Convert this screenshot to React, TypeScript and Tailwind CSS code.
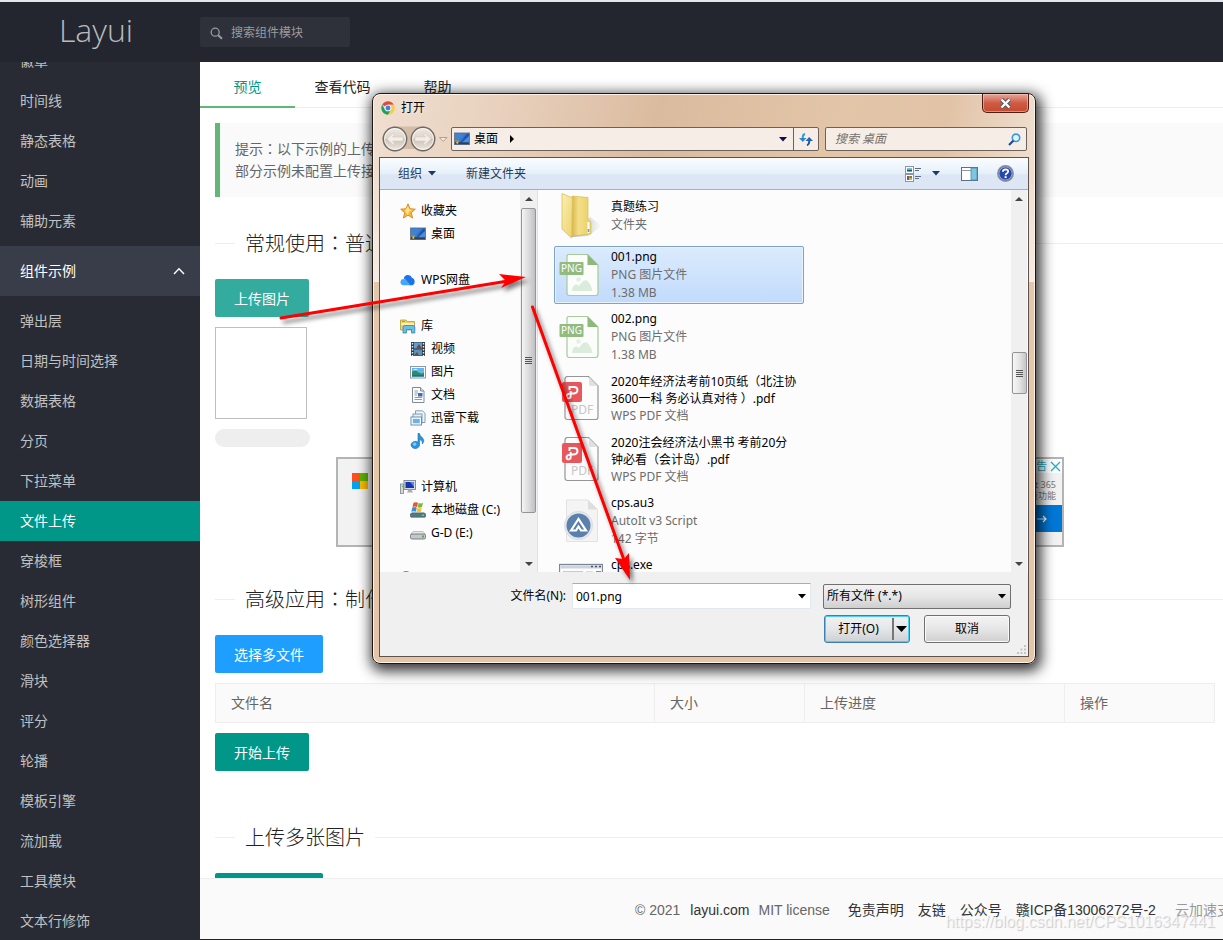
import React from "react";

const shortcutsTop = ["徽章", "时间线", "静态表格", "动画", "辅助元素"];
const shortcutsBottom = [
  "弹出层",
  "日期与时间选择",
  "数据表格",
  "分页",
  "下拉菜单",
  "文件上传",
  "穿梭框",
  "树形组件",
  "颜色选择器",
  "滑块",
  "评分",
  "轮播",
  "模板引擎",
  "流加载",
  "工具模块",
  "文本行修饰",
];

/* ---------- icons ---------- */

function ChromeIcon() {
  return (
    <svg width="14" height="14" viewBox="0 0 48 48" aria-hidden="true">
      <path d="M24 24 4.1 12.5A23 23 0 0 1 43.9 12.5H24Z" fill="#dd4b3e" />
      <path d="M24 24 43.9 12.5A23 23 0 0 1 24 47L34 30Z" fill="#fdcb3c" />
      <path d="M24 24 14 30 4.1 12.5A23 23 0 0 0 24 47L34 30Z" fill="#20a05a" />
      <path d="M24 12.5H43.9L34 30Z" fill="#fdcb3c" />
      <circle cx="24" cy="24" r="11.5" fill="#fff" />
      <circle cx="24" cy="24" r="8.5" fill="#3f7fe8" />
    </svg>
  );
}

function NavCircles() {
  return (
    <svg width="68" height="28" viewBox="0 0 68 28" aria-hidden="true">
      <defs>
        <linearGradient id="circ" x1="0" y1="0" x2="0" y2="1">
          <stop offset="0" stopColor="#efe9e3" />
          <stop offset="0.5" stopColor="#ddd3c9" />
          <stop offset="0.52" stopColor="#cdc2b7" />
          <stop offset="1" stopColor="#efe8e1" />
        </linearGradient>
      </defs>
      <path d="M14 1.5H42a12 12 0 0 1 0 25Q36 26 34 24H22Q19 26 14 26.5A12 12 0 0 1 14 1.5Z" fill="#c9b09a" opacity="0.7" />
      <circle cx="14" cy="14" r="11.7" fill="url(#circ)" stroke="#6f6a66" strokeWidth="1.4" />
      <circle cx="14" cy="14" r="10.4" fill="none" stroke="#fff" strokeOpacity="0.7" />
      <circle cx="42" cy="14" r="11.7" fill="url(#circ)" stroke="#6f6a66" strokeWidth="1.4" />
      <circle cx="42" cy="14" r="10.4" fill="none" stroke="#fff" strokeOpacity="0.7" />
      <path d="M6 14 13 7.5V10.5L11.500 12H22V16H11.500L13 17.500V20.500Z" fill="#f3eee9" stroke="#d3cac1" strokeWidth="0.6" />
      <path d="M50 14 43 7.500V10.500L44.500 12H34V16H44.500L43 17.500V20.500Z" fill="#f3eee9" stroke="#d3cac1" strokeWidth="0.6" />
      <path d="M58.500 12.500H66L62.200 16.500Z" fill="#f3e6da" stroke="#a58f7c" strokeWidth="0.8" />
    </svg>
  );
}

function DesktopIcon() {
  return (
    <svg width="16" height="16" viewBox="0 0 16 16" aria-hidden="true">
      <rect x="0.500" y="2" width="15" height="11.500" fill="#1f55b0" stroke="#6d7d90" />
      <path d="M1 2.500H11L4 11H1Z" fill="#3f83d6" />
      <path d="M15 5V11.500H8Z" fill="#4b8fdc" />
      <path d="M4 11 11 2.500H13L6.500 11Z" fill="#6fb0ea" opacity="0.4" />
      <rect x="1" y="11.500" width="14" height="1.800" fill="#33404f" />
      <rect x="1.500" y="9.200" width="1.600" height="1.600" fill="#ef6a2a" />
      <rect x="3.200" y="9.400" width="1.600" height="1.600" fill="#7ec43c" />
      <rect x="2.400" y="11" width="1.800" height="1.600" fill="#f8d73b" />
    </svg>
  );
}

function StarIcon() {
  return (
    <svg width="16" height="16" viewBox="0 0 16 16" aria-hidden="true">
      <path d="M8 .8 10 5.700 15.300 6.200 11.200 9.700 12.600 15 8 12.100 3.400 15 4.800 9.700 .7 6.200 6 5.700Z" fill="#fbb72b" stroke="#d9822a" strokeWidth="0.9" />
      <path d="M8 3 9.300 6.600 12.500 7 9 8.500 8 12 5 8.500 5.500 7Z" fill="#fde489" />
    </svg>
  );
}

function CloudIcon() {
  return (
    <svg width="16" height="16" viewBox="0 0 16 16" aria-hidden="true">
      <path d="M3.800 6.500A4.300 4.300 0 0 1 12 5.800A4 4 0 0 1 12.500 13.200H9.500Q6 7.500 3.800 6.500Z" fill="#1c74e8" />
      <path d="M.4 10A3.300 3.300 0 0 1 6.500 8.500L10.500 13.200H3.500A3.200 3.200 0 0 1 .4 10Z" fill="#47a6f8" />
    </svg>
  );
}

function LibraryIcon() {
  return (
    <svg width="16" height="16" viewBox="0 0 16 16" aria-hidden="true">
      <path d="M.5 2H6L7.200 3.500H14.500V12H.5Z" fill="#f0d468" stroke="#b8973a" strokeWidth="0.8" />
      <rect x="2" y="3" width="3" height="1" fill="#6db84a" />
      <rect x="1" y="5" width="13" height="2" fill="#fff0a8" />
      <path d="M3 15V9Q3 7.500 4.500 7.500H13Q14.800 7.500 14.800 9V15H11.500V11.500H6.500V15Z" fill="#65bfe8" stroke="#3288b4" strokeWidth="0.8" />
    </svg>
  );
}

function VideoIcon() {
  return (
    <svg width="16" height="16" viewBox="0 0 16 16" aria-hidden="true">
      <rect x="1" y="1" width="14" height="14" fill="#343a42" />
      <rect x="4" y="1.500" width="8" height="6" fill="#5da0cf" />
      <rect x="4" y="8.500" width="8" height="6" fill="#4f94c4" />
      <path d="M6 7.500 9 3 12 7.500ZM4 14.500 7 11 9 14.500Z" fill="#7a4530" />
      <path d="M2.500 2V15M13.500 2V15" stroke="#e7edf2" strokeWidth="1.400" strokeDasharray="1.500 1.500" />
    </svg>
  );
}

function PictureIcon() {
  return (
    <svg width="16" height="16" viewBox="0 0 16 16" aria-hidden="true">
      <rect x="0.500" y="2.500" width="15" height="11.500" fill="#fff" stroke="#8c98a4" />
      <rect x="2" y="4" width="12" height="8.500" fill="#63b5ea" />
      <path d="M2 8Q5 5.500 8 8T14 8.500V12.500H2Z" fill="#2f8a6c" />
      <path d="M2 11H14V12.500H2Z" fill="#1d6d9c" />
      <path d="M3 6Q5 4 8 6Z" fill="#fff" />
    </svg>
  );
}

function DocIcon() {
  return (
    <svg width="16" height="16" viewBox="0 0 16 16" aria-hidden="true">
      <path d="M2.500 .5H10.500L14 4V15.500H2.500Z" fill="#fdfdfd" stroke="#7f8b97" />
      <path d="M10.500 .5V4H14" fill="#d8e0e8" stroke="#7f8b97" />
      <path d="M4.500 4H8M4.500 6H8M4.500 8H7M4.500 10.500H12M4.500 12.500H12" stroke="#8b9cb4" />
      <rect x="8" y="6" width="4.500" height="3.500" fill="#3f6db8" />
    </svg>
  );
}

function DownloadIcon() {
  return (
    <svg width="16" height="16" viewBox="0 0 16 16" aria-hidden="true">
      <path d="M5.500 .8H12.500L15 3.300V12.500H5.500Z" fill="#eef4fa" stroke="#7796b4" strokeWidth="0.9" />
      <rect x="3" y="4" width="9" height="9" fill="#e4eef8" stroke="#7796b4" strokeWidth="0.9" />
      <rect x="1" y="7" width="10.500" height="8" fill="#fff" stroke="#5b86ad" strokeWidth="0.9" />
      <rect x="2.800" y="8.800" width="7" height="4.500" fill="#6fb2e6" />
    </svg>
  );
}

function MusicIcon() {
  return (
    <svg width="16" height="16" viewBox="0 0 16 16" aria-hidden="true">
      <path d="M8 0.300H9.300Q9.800 3 12.500 4.800Q15 7.500 12.500 11Q13 7.500 9.500 6.500V12A4.200 3.600 0 1 1 8 9.200Z" fill="#2b93dc" stroke="#1b6cab" strokeWidth="0.600" />
      <circle cx="4.600" cy="11.200" r="1.600" fill="#7fd0f8" />
    </svg>
  );
}

function ComputerIcon() {
  return (
    <svg width="16" height="16" viewBox="0 0 16 16" aria-hidden="true">
      <rect x="0.500" y="5" width="3" height="9.500" fill="#d3d8dc" stroke="#7c858d" strokeWidth="0.800" />
      <rect x="4" y="1.500" width="11.500" height="9" fill="#d9dcdf" stroke="#7c858d" strokeWidth="0.900" />
      <rect x="5.500" y="3" width="8.500" height="6" fill="#1635b4" />
      <path d="M10 3H14V8Z" fill="#5d86e8" />
      <path d="M8.500 10.500H11.500L13 13.500H7Z" fill="#a8afb5" />
      <rect x="2" y="7" width="1" height="1" fill="#48b548" />
    </svg>
  );
}

function SystemDiskIcon() {
  return (
    <svg width="16" height="16" viewBox="0 0 16 16" aria-hidden="true">
      <path d="M2 10H14L15.500 12H.5Z" fill="#9fb0b6" />
      <path d="M3.500 .8Q6 -.4 8 .8L7 5Q5 3.900 2.500 5Z" fill="#e8562b" />
      <path d="M8.600 1.100Q11 2 13 .8L12 5Q10 6.200 7.600 5.200Z" fill="#7cb93a" />
      <path d="M2.300 5.600Q4.800 4.500 6.800 5.700L5.800 9.700Q4 8.700 1.300 9.700Z" fill="#3b8fd8" />
      <path d="M7.400 5.900Q9.800 6.900 11.800 5.700L10.800 9.700Q8.800 10.900 6.400 9.900Z" fill="#f6c32e" />
      <rect x="0.500" y="11.500" width="15" height="3.700" rx="0.800" fill="#4f7b86" stroke="#3b545c" strokeWidth="0.600" />
      <rect x="12" y="12.500" width="2" height="1.500" fill="#5fe04a" />
    </svg>
  );
}

function DiskIcon() {
  return (
    <svg width="16" height="16" viewBox="0 0 16 16" aria-hidden="true">
      <path d="M3 6.500H13L15.500 9.500H.5Z" fill="#e6e8e9" stroke="#9da3a7" strokeWidth="0.600" />
      <rect x="0.500" y="9" width="15" height="5" rx="1.500" fill="#c3c7ca" stroke="#70777c" strokeWidth="0.900" />
      <rect x="12" y="10.500" width="2" height="2" fill="#45b635" />
    </svg>
  );
}

function NetworkIcon() {
  return (
    <svg width="16" height="16" viewBox="0 0 16 16" aria-hidden="true">
      <circle cx="6" cy="5.500" r="5.500" fill="#3f92cf" />
      <path d="M3 1.500Q6 2.500 8 .5L10 2.500Q6 5.500 3 3.500Z" fill="#6cbb7a" />
    </svg>
  );
}

function FolderBig() {
  return (
    <svg width="44" height="46" viewBox="-1 0 44 46" className="shrink-0" aria-hidden="true">
      <defs>
        <linearGradient id="fold" x1="0" y1="0" x2="1" y2="0">
          <stop offset="0" stopColor="#d9b94e" />
          <stop offset="0.35" stopColor="#f3de88" />
          <stop offset="1" stopColor="#ebcf62" />
        </linearGradient>
        <linearGradient id="leaf" x1="0" y1="0" x2="1" y2="1">
          <stop offset="0" stopColor="#fbefb0" />
          <stop offset="1" stopColor="#ecd36d" />
        </linearGradient>
        <linearGradient id="foldshade" x1="0" y1="0" x2="1" y2="0">
          <stop offset="0" stopColor="#777" stopOpacity="0.700" />
          <stop offset="1" stopColor="#999" stopOpacity="0" />
        </linearGradient>
      </defs>
      <path d="M10 44 30 24 42 33 28 43Z" fill="url(#foldshade)" />
      <path d="M12 3 28 4.500V26L31 29V41L12 43Z" fill="url(#fold)" stroke="#d8bd55" strokeWidth="0.700" />
      <path d="M2 0.500 12.500 5 11.500 45 2 36Z" fill="url(#leaf)" stroke="#d9be59" strokeWidth="0.800" />
      <path d="M28.500 29V40" stroke="#fff" strokeWidth="2" />
      <path d="M28.500 36V39" stroke="#58a0dc" strokeWidth="1.500" />
    </svg>
  );
}

function PngBig() {
  return (
    <svg width="42" height="46" viewBox="0 0 42 46" className="shrink-0" aria-hidden="true">
      <path d="M10 2.500H28.500L39 13V41Q39 43.500 36.500 43.500H10.500Q8 43.500 8 41V4.500Q8 2.500 10 2.500Z" fill="#fbfdfa" stroke="#abc99a" strokeWidth="1.200" />
      <path d="M28.500 2.500 39 13H28.500Z" fill="#8db879" />
      <rect x="0.500" y="10" width="24" height="13" rx="1" fill="#92bb80" />
      <text x="12.500" y="20" textAnchor="middle" fontSize="10" fill="#fff" className="font-['Noto_Sans',sans-serif]">PNG</text>
      <circle cx="19.500" cy="27.500" r="2.200" fill="#e3f0e2" />
      <path d="M13 38Q14 32 18 32.500L20 34Q24 27 28 28.500Q32 32 33.500 39H13Z" fill="#dcecdc" />
    </svg>
  );
}

function PdfBig() {
  return (
    <svg width="42" height="46" viewBox="1 1 42 46" className="shrink-0" aria-hidden="true">
      <path d="M10 1.500H30.500L40 11V42Q40 44.500 37.500 44.500H9.500Q7 44.500 7 42V4Q7 1.500 10 1.500Z" fill="#fcfcfc" stroke="#969696" strokeWidth="1.200" />
      <path d="M31 2V9Q31 11 33 11H40Z" fill="#e0e0e0" />
      <rect x="4" y="7" width="20" height="20" rx="2" fill="#e8575b" />
      <path d="M11.500 15V12H16Q19.500 12 19.500 15T16 18.500H12.500Q8.500 19 8.500 21.500Q9 24 11.500 23.200Q13 22.500 12.700 20V16" fill="none" stroke="#fff" strokeWidth="1.900" />
      <text x="24" y="38.500" textAnchor="middle" fontSize="12" fill="#c6c6c6" className="font-['Noto_Sans',sans-serif]">PDF</text>
    </svg>
  );
}

function AutoItBig() {
  return (
    <svg width="42" height="46" viewBox="1 0 42 46" className="shrink-0" aria-hidden="true">
      <path d="M8.500 2H30L39.500 11.500V43.500H8.500Z" fill="#f4f4f4" stroke="#e2e2e2" />
      <path d="M30 2V11.500H39.500Z" fill="#dedede" />
      <circle cx="20.500" cy="27.500" r="14.200" fill="#e3e6ea" stroke="#d2d6db" strokeWidth="0.600" />
      <circle cx="20.500" cy="27.500" r="12" fill="#5a80ad" />
      <path d="M13 32.500 20.500 21 28 32.500H23L20.500 28.500 18 32.500Z" fill="none" stroke="#fff" strokeWidth="2.200" />
    </svg>
  );
}

function ExeBig() {
  return (
    <svg width="44" height="46" viewBox="0 0 44 46" className="shrink-0" aria-hidden="true">
      <rect x="0.500" y="4.500" width="43" height="38" fill="#fdfdfd" stroke="#7d8794" strokeWidth="1.300" />
      <rect x="1.500" y="5.500" width="41" height="3" fill="#ccd3dc" />
      <path d="M32 6.500H34M36 6.500H38M40 6.500H42" stroke="#44546a" strokeWidth="1.500" />
      <rect x="4" y="11" width="20" height="5" fill="#c5cbd3" />
      <rect x="27" y="11" width="7" height="5" fill="#d9dde2" />
      <rect x="37" y="11" width="5" height="5" fill="#6c8fc0" />
    </svg>
  );
}

function Caret({ className }: { className: string }) {
  return (
    <svg width="8" height="5" viewBox="0 0 8 5" className={className} aria-hidden="true">
      <path d="M0 0H8L4 4.600Z" fill="currentColor" />
    </svg>
  );
}

/* ---------- page parts ---------- */

/* Full-width colon with the mark centred in its cell. */
function Colon() {
  return <span className="font-['Noto_Sans_CJK_TC',sans-serif] leading-none" lang="zh-TW">：</span>;
}

function Header() {
  return (
    <header className="flex h-[62px] shrink-0 items-center border-t-2 border-[#e4e6ea] bg-[#23262e]">
      <a href="#" className="w-[200px] pr-2 pb-1 text-center font-['Open_Sans','Noto_Sans',sans-serif] text-[32px] leading-10 font-light text-[#b9babd]">
        Layui
      </a>
      <label className="flex h-[30px] w-[150px] items-center gap-2 rounded-xs bg-[#2e3139] pt-[2px] pl-[10px] text-[#9a9b9f]">
        <svg width="13" height="13" viewBox="0 0 13 13" className="shrink-0" aria-hidden="true">
          <circle cx="5.200" cy="5.200" r="4" fill="none" stroke="currentColor" strokeWidth="1.300" />
          <path d="M8.200 8.200 12 11.800" stroke="currentColor" strokeWidth="2" />
        </svg>
        <input
          aria-label="搜索组件模块"
          placeholder="搜索组件模块"
          className="w-full min-w-0 bg-transparent text-xs outline-none placeholder:text-[#9a9b9f]"
        />
      </label>
    </header>
  );
}

function SideLink({ label }: { label: string }) {
  const active = label === "文件上传";
  return (
    <a
      href="#"
      className={
        active
          ? "block h-10 bg-[#009688] pl-5 leading-10 text-white"
          : "block h-10 pl-5 leading-10 text-[#c0c1c3]"
      }
    >
      {label}
    </a>
  );
}

function Sidebar() {
  return (
    <nav className="w-[200px] shrink-0 overflow-hidden bg-[#282b33]">
      <div className="-mt-[21px]">
        {shortcutsTop.map((s) => (
          <SideLink key={s} label={s} />
        ))}
        <button className="my-[5px] flex h-[50px] w-full items-center justify-between bg-[#393d49] pr-[15px] pl-5 text-white">
          组件示例
          <svg width="12" height="8" viewBox="0 0 12 8" aria-hidden="true">
            <path d="M1 7 6 1.700 11 7" fill="none" stroke="#fff" strokeWidth="1.400" />
          </svg>
        </button>
        {shortcutsBottom.map((s) => (
          <SideLink key={s} label={s} />
        ))}
      </div>
    </nav>
  );
}

function SectionTitle({ children }: { children: React.ReactNode }) {
  return (
    <div className="flex h-7 items-center gap-[10px]">
      <span className="h-px w-5 bg-[#eee]" />
      <h2 className="pt-[2px] text-xl leading-7 font-light whitespace-nowrap text-[#222]">{children}</h2>
      <span className="h-px flex-1 bg-[#eee]" />
    </div>
  );
}

function Content() {
  return (
    <div className="min-h-0 flex-1 overflow-hidden">
      <div className="flex h-[46px] border-b border-[#eee]">
        <button className="h-[46px] w-[95px] border-b-2 border-[#5fb878] pt-[6px] text-[#009688]">预览</button>
        <button className="w-[95px] pt-1 text-[#222]">查看代码</button>
        <button className="w-[95px] pt-1 text-[#222]">帮助</button>
      </div>
      <div className="pl-[15px]">
        <blockquote className="mt-[15px] border-l-[5px] border-[#5fb878] bg-[#fafafa] p-[15px] leading-[22px] text-[#666]">
          提示<Colon />以下示例的上传
          <br />
          部分示例未配置上传接
        </blockquote>
        <div className="mt-8">
          <SectionTitle>常规使用<Colon />普通</SectionTitle>
        </div>
        <button className="mt-[22px] block h-[38px] rounded-xs bg-[#33ab9f] px-[19px] pt-[2px] text-white">上传图片</button>
        <div className="mt-[10px] size-[92px] border border-[#bfbfbf]" />
        <div className="mt-[10px] h-[18px] w-[95px] rounded-full bg-[#eee]" />
        <div className="mt-[10px] ml-[121px] flex h-[90px] w-[728px] items-start justify-between border-2 border-[#b4b4b4] bg-[#f2f2f2]">
          <div className="mt-[14px] ml-[14px] grid grid-cols-2">
            <span className="size-2 bg-[#ff4f1a]" />
            <span className="size-2 bg-[#5bb500]" />
            <span className="size-2 bg-[#00a4f4]" />
            <span className="size-2 bg-[#ffb900]" />
          </div>
          <div className="flex h-full flex-col text-[9px] leading-[11px] text-[#777]">
            <div className="flex h-[14px] items-center justify-end gap-[3px] bg-white pr-px text-[11px] text-[#17b2cc]">
              广告
              <svg width="11" height="11" viewBox="0 0 11 11" aria-hidden="true">
                <path d="M1 1 10 10M10 1 1 10" stroke="#17b2cc" strokeWidth="1.300" />
              </svg>
            </div>
            <p className="mt-[6px] pr-[6px] text-right font-['Noto_Sans','Noto_Sans_CJK_SC',sans-serif]">
              Microsoft 365
              <br />
              高级功能
            </p>
            <div className="mt-1 flex h-[27px] w-[120px] items-center justify-end bg-[#0078d7] pr-[15px]">
              <svg width="10" height="8" viewBox="0 0 10 8" aria-hidden="true">
                <path d="M0 4H9M6 1 9 4 6 7" fill="none" stroke="#fff" strokeWidth="1.200" />
              </svg>
            </div>
          </div>
        </div>
        <div className="mt-[38px]">
          <SectionTitle>高级应用<Colon />制作</SectionTitle>
        </div>
        <button className="mt-[22px] block h-[38px] rounded-xs bg-[#1e9fff] px-[19px] pt-[2px] text-white">选择多文件</button>
        <table className="mt-[10px] w-[1000px] table-fixed border-collapse border border-[#eee] bg-[#fafafa] text-left text-[#666]">
          <thead>
            <tr className="h-[39px]">
              <th className="border border-[#eee] px-[15px] font-normal">文件名</th>
              <th className="w-[150px] border border-[#eee] px-[15px] font-normal">大小</th>
              <th className="w-[260px] border border-[#eee] px-[15px] font-normal">上传进度</th>
              <th className="w-[150px] border border-[#eee] px-[15px] font-normal">操作</th>
            </tr>
          </thead>
        </table>
        <button className="mt-[10px] block h-[38px] rounded-xs bg-[#009688] px-[19px] pt-[2px] text-white">开始上传</button>
        <div className="mt-[52px]">
          <SectionTitle>上传多张图片</SectionTitle>
        </div>
        <button aria-label="多图片上传" className="mt-[22px] block h-[38px] w-[108px] rounded-xs bg-[#009688]" />
      </div>
    </div>
  );
}

function Footer() {
  return (
    <footer className="flex h-[62px] shrink-0 items-center border-t border-b border-t-[#eee] border-b-[#2a211e] bg-[#fafafa] pt-[2px] pl-[435px] whitespace-nowrap text-[#666]">
      <span>© 2021</span>
      <a href="#" className="ml-[10px] text-[#333]">layui.com</a>
      <a href="#" className="ml-[9px]">MIT license</a>
      <a href="#" className="ml-[18px] text-[#333]">免责声明</a>
      <a href="#" className="ml-[14px] text-[#333]">友链</a>
      <a href="#" className="ml-[14px] text-[#333]">公众号</a>
      <a href="#" className="ml-[14px] text-[#333]">赣ICP备13006272号-2</a>
      <a href="#" className="ml-[19px] text-[#999]">云加速支持</a>
    </footer>
  );
}

/* ---------- file dialog ---------- */

type Place = { label: string; icon: React.ReactNode; child?: boolean } | null;

const places: Place[] = [
  { label: "收藏夹", icon: <StarIcon /> },
  { label: "桌面", icon: <DesktopIcon />, child: true },
  null,
  { label: "WPS网盘", icon: <CloudIcon /> },
  null,
  { label: "库", icon: <LibraryIcon /> },
  { label: "视频", icon: <VideoIcon />, child: true },
  { label: "图片", icon: <PictureIcon />, child: true },
  { label: "文档", icon: <DocIcon />, child: true },
  { label: "迅雷下载", icon: <DownloadIcon />, child: true },
  { label: "音乐", icon: <MusicIcon />, child: true },
  null,
  { label: "计算机", icon: <ComputerIcon /> },
  { label: "本地磁盘 (C:)", icon: <SystemDiskIcon />, child: true },
  { label: "G-D (E:)", icon: <DiskIcon />, child: true },
  null,
  { label: "", icon: <NetworkIcon /> },
];

function ScrollArrow({ up }: { up?: boolean }) {
  return (
    <svg width="8" height="4" viewBox="0 0 8 4" aria-hidden="true">
      <path d={up ? "M0 4H8L4 0Z" : "M0 0H8L4 4Z"} fill="#444" />
    </svg>
  );
}

function Grip() {
  return (
    <span className="flex flex-col gap-px">
      <span className="h-px w-[7px] bg-[#555]" />
      <span className="h-px w-[7px] bg-[#555]" />
      <span className="h-px w-[7px] bg-[#555]" />
      <span className="h-px w-[7px] bg-[#555]" />
    </span>
  );
}

function PlacesPane() {
  return (
    <div className="flex w-[158px] shrink-0 overflow-hidden border-r border-[#d5e3f2]">
      <ul className="min-w-0 flex-1 overflow-hidden pt-[9px] pl-5">
        {places.map((p, i) => (
          <li key={i} className="h-[23px]">
            {p && (
              <a
                href="#"
                aria-label={p.label || "网络"}
                className={
                  p.child
                    ? "flex h-[23px] items-center gap-[5px] pl-[10px] whitespace-nowrap"
                    : "flex h-[23px] items-center gap-[5px] whitespace-nowrap"
                }
              >
                {p.icon}
                {p.label}
              </a>
            )}
          </li>
        ))}
      </ul>
      <div className="flex w-[17px] flex-col items-center bg-[#f0f0f0]">
        <div className="flex h-[18px] items-center"><ScrollArrow up /></div>
        <div className="flex h-[305px] w-[15px] items-center justify-center rounded-xs border border-[#959595] bg-linear-to-r from-[#f5f5f5] via-[#dcdcdc] to-[#bfc0c4]">
          <Grip />
        </div>
        <div className="mt-auto flex h-[17px] items-center"><ScrollArrow /></div>
      </div>
    </div>
  );
}

function FileRow({
  icon,
  lines,
  detail,
  height,
  selected,
}: {
  icon: React.ReactNode;
  lines: string[];
  detail: string[];
  height: string;
  selected?: boolean;
}) {
  return (
    <li className={height}>
      <button
        className={
          selected
            ? "flex h-full w-[250px] items-center rounded-xs border border-[#7da2ce] bg-linear-to-b from-[#dcebfc] to-[#c1dbfc] pl-1 text-left shadow-[inset_0_0_0_1px_#e8f2fd]"
            : "flex h-full w-[250px] items-center border border-transparent pl-1 text-left"
        }
      >
        <span className="w-[52px] shrink-0">{icon}</span>
        <span className="block whitespace-nowrap">
          {lines.map((l) => (
            <span key={l} className={lines.length > 1 ? "block leading-[17px]" : "block leading-[18px]"}>{l}</span>
          ))}
          {detail.map((l) => (
            <span key={l} className="block leading-[18px] text-[#6d6d6d]">{l}</span>
          ))}
        </span>
      </button>
    </li>
  );
}

function FileList() {
  return (
    <div className="flex min-w-0 flex-1 overflow-hidden pr-px">
      <ul className="flex flex-1 flex-col gap-1 pl-4">
        <FileRow height="h-[52px] shrink-0" icon={<FolderBig />} lines={["真题练习"]} detail={["文件夹"]} />
        <FileRow height="h-[58px] shrink-0" icon={<PngBig />} lines={["001.png"]} detail={["PNG 图片文件", "1.38 MB"]} selected />
        <FileRow height="h-[58px] shrink-0" icon={<PngBig />} lines={["002.png"]} detail={["PNG 图片文件", "1.38 MB"]} />
        <FileRow height="h-[57px] shrink-0" icon={<PdfBig />} lines={["2020年经济法考前10页纸（北注协", "3600一科 务必认真对待 ）.pdf"]} detail={["WPS PDF 文档"]} />
        <FileRow height="h-[57px] shrink-0" icon={<PdfBig />} lines={["2020注会经济法小黑书 考前20分", "钟必看（会计岛）.pdf"]} detail={["WPS PDF 文档"]} />
        <FileRow height="h-[58px] shrink-0" icon={<AutoItBig />} lines={["cps.au3"]} detail={["AutoIt v3 Script", "142 字节"]} />
        <FileRow height="h-[58px] shrink-0" icon={<ExeBig />} lines={["cps.exe"]} detail={["应用程序", "866 KB"]} />
      </ul>
      <div className="flex w-4 flex-col items-center bg-[#f0f0f0]">
        <div className="flex h-[18px] items-center"><ScrollArrow up /></div>
        <div className="mt-36 flex h-[42px] w-[15px] items-center justify-center rounded-xs border border-[#959595] bg-linear-to-r from-[#f8f8f8] via-[#e4e4e4] to-[#c4c5c9]">
          <Grip />
        </div>
        <div className="mt-auto flex h-[17px] items-center"><ScrollArrow /></div>
      </div>
    </div>
  );
}

function OpenDialog() {
  return (
    <section
      role="dialog"
      aria-label="打开"
      className="absolute top-[93px] left-[372px] flex h-[571px] w-[664px] flex-col rounded-lg border border-[#1c1714] bg-[linear-gradient(to_bottom,transparent_0,transparent_80px,#f6ece3_188px,#e4c7ab_188px,#e4c5a8_100%),linear-gradient(100deg,#f0ded0_0%,#e9d3c0_15%,#dbbb9f_38%,#e3c5a8_62%,#e2c3a7_76%,#efdecf_88%,#ecd7c4_100%)] px-[6px] pb-[6px] font-['Noto_Sans','Noto_Sans_CJK_SC',sans-serif] text-xs text-black shadow-[inset_0_0_0_1px_#fbf1e8,2px_4px_14px_3px_rgba(0,0,0,0.8)]"
    >
      <div className="flex h-[31px] shrink-0 items-start justify-between pl-[2px]">
        <h1 className="flex h-7 items-center gap-[6px] text-shadow-[0_0_6px_#fff]">
          <ChromeIcon />
          打开
        </h1>
        <button
          aria-label="关闭"
          className="flex h-[19px] w-[47px] items-center justify-center rounded-b-[5px] border border-t-0 border-[#4d1d18] bg-linear-to-b from-[#e3a79c] from-0% via-[#cf5b45] via-50% to-[#c64a2c] to-100% shadow-[inset_0_0_0_1px_rgba(255,210,195,0.5)]"
        >
          <svg width="13" height="11" viewBox="0 0 13 11" aria-hidden="true">
            <path d="M2.500 1.500 10.500 9.500M10.500 1.500 2.500 9.500" stroke="#555a66" strokeWidth="4.400" />
            <path d="M2.500 1.500 10.500 9.500M10.500 1.500 2.500 9.500" stroke="#fff" strokeWidth="2.400" />
          </svg>
        </button>
      </div>
      <div className="flex h-7 shrink-0 items-center pr-[2px] pl-[2px]">
        <NavCircles />
        <div className="ml-[2px] flex h-6 min-w-0 flex-1 items-center rounded-xs border border-[#6d625b] bg-[#f6ede6]">
          <button className="flex items-center gap-1 pl-[2px]">
            <DesktopIcon />
            桌面
            <svg width="4" height="8" viewBox="0 0 4 8" className="ml-2" aria-hidden="true">
              <path d="M0 0 4 4 0 8Z" fill="#000" />
            </svg>
          </button>
          <button aria-label="历史位置" className="ml-auto px-[6px] text-[#0c0c50]">
            <Caret className="" />
          </button>
          <button aria-label="刷新" className="flex h-full w-[25px] items-center justify-center border-l border-[#6d625b]">
            <svg width="14" height="13" viewBox="0 0 14 13" aria-hidden="true">
              <path d="M6 1Q3.500 1.500 3.800 5" fill="none" stroke="#2f9fe0" strokeWidth="2" />
              <path d="M0 5H7.500L3.800 9Z" fill="#2f86d0" />
              <path d="M8 12.200Q10.500 11.500 10.200 8" fill="none" stroke="#1d559f" strokeWidth="2" />
              <path d="M6.500 8H14L10.200 4Z" fill="#2563b0" />
            </svg>
          </button>
        </div>
        <label className="ml-[6px] flex h-6 w-[202px] items-center rounded-xs border border-[#6d625b] bg-[#f6ede6] pr-[5px] pl-[9px]">
          <input
            aria-label="搜索 桌面"
            placeholder="搜索 桌面"
            className="w-full min-w-0 bg-transparent italic outline-none placeholder:text-[#77706b]"
          />
          <svg width="13" height="13" viewBox="0 0 13 13" className="shrink-0" aria-hidden="true">
            <circle cx="8" cy="4.800" r="3.700" fill="#e2f2fb" stroke="#3b9ad6" strokeWidth="1.600" />
            <path d="M5.500 7.500 1 12" stroke="#1d4f94" strokeWidth="2.200" />
          </svg>
        </label>
      </div>
      <div className="mt-[4px] flex min-h-0 flex-1 flex-col border border-[#5d534c] bg-[#fcfcfc]">
        <div className="flex h-8 shrink-0 items-center border-b border-[#9fb0cc] bg-linear-to-b from-[#fafdff] from-0% via-[#e6f0fa] via-50% to-[#dce6f4] to-55% pr-[17px] pl-[18px] text-[#1e395b]">
          <button className="flex items-center gap-[6px]">
            组织
            <Caret className="" />
          </button>
          <button className="ml-[30px]">新建文件夹</button>
          <button aria-label="更改您的视图" className="ml-auto flex items-center gap-[10px]">
            <svg width="17" height="16" viewBox="0 0 17 16" aria-hidden="true">
              <rect x="0.500" y="0.500" width="8" height="7" fill="#fff" stroke="#8a97a8" />
              <rect x="0.500" y="8.500" width="8" height="7" fill="#fff" stroke="#8a97a8" />
              <rect x="2" y="2" width="5" height="4" fill="#7cc4e0" />
              <path d="M2 4.500H7" stroke="#1d5a6e" strokeWidth="1.500" />
              <rect x="2" y="10" width="2.500" height="2" fill="#d63b2a" />
              <rect x="4.500" y="10" width="2.500" height="2" fill="#35a04a" />
              <rect x="2" y="12" width="2.500" height="2" fill="#3566d0" />
              <rect x="4.500" y="12" width="2.500" height="2" fill="#e3b022" />
              <path d="M10 2.500H16M10 4.500H14M10 10.500H16M10 12.500H14" stroke="#5d6c80" />
            </svg>
            <Caret className="" />
          </button>
          <button aria-label="显示预览窗格" className="ml-[21px]">
            <svg width="17" height="14" viewBox="0 0 17 14" aria-hidden="true">
              <rect x="0.500" y="0.500" width="16" height="13" fill="#fff" stroke="#5f6f86" />
              <path d="M.5 3.500H10" stroke="#8d9aac" />
              <rect x="10" y="1" width="6" height="12" fill="#7cc7df" stroke="#4e89a5" strokeWidth="0.800" />
            </svg>
          </button>
          <button aria-label="获取帮助" className="-mr-[3px] ml-[19px]">
            <svg width="17" height="17" viewBox="0 0 17 17" aria-hidden="true">
              <circle cx="8.500" cy="8.500" r="7.700" fill="#2447ac" stroke="#8d8f98" strokeWidth="1.500" />
              <circle cx="8.500" cy="8.500" r="6.500" fill="none" stroke="#b9c7ea" strokeWidth="0.700" />
              <path d="M5.900 6.700Q6 4.300 8.600 4.300Q11.200 4.400 11.200 6.400Q11.100 7.700 9.600 8.500Q8.600 9 8.600 10.200" fill="none" stroke="#fff" strokeWidth="1.800" />
              <rect x="7.600" y="11.200" width="2" height="1.900" fill="#fff" />
            </svg>
          </button>
        </div>
        <div className="flex min-h-0 flex-1 overflow-hidden">
          <PlacesPane />
          <FileList />
        </div>
        <div className="relative h-[84px] shrink-0 bg-[#f0f0f0] pt-[11px] pr-[17px]">
          <div className="flex items-center justify-end">
            <label htmlFor="file-name" className="mr-[6px]">文件名(N):</label>
            <span className="flex h-[26px] w-[239px] items-center border border-[#e2e8f0] border-t-[#abadb3] bg-white pr-1 pl-[3px]">
              <input id="file-name" defaultValue="001.png" className="w-full min-w-0 bg-transparent pt-px outline-none" />
              <Caret className="shrink-0" />
            </span>
            <span className="ml-3 grid h-[25px] w-[188px] items-center rounded-xs border border-[#707070] bg-linear-to-b from-[#f2f2f2] via-[#e6e6e6] to-[#cfcfcf]">
              <select aria-label="文件类型" className="col-start-1 row-start-1 h-full w-full appearance-none bg-transparent pl-[3px]">
                <option>所有文件 (*.*)</option>
              </select>
              <Caret className="pointer-events-none col-start-1 row-start-1 mr-1 justify-self-end" />
            </span>
          </div>
          <div className="mt-[6px] mr-px flex justify-end gap-[14px]">
            <div className="flex h-7 w-[86px] items-center rounded-[3px] border border-[#3c7fb1] bg-linear-to-b from-[#f2f2f2] via-[#e4e6e8] to-[#cdd0d3] pr-px shadow-[inset_0_0_0_1px_#48d0f5]">
              <button className="flex-1 text-center">打开(O)</button>
              <button aria-label="打开方式" className="flex h-[22px] w-4 items-center border-l-2 border-[#777] pl-[2px]">
                <svg width="11" height="6" viewBox="0 0 11 6" aria-hidden="true">
                  <path d="M0 0H11L5.500 6Z" fill="#000" />
                </svg>
              </button>
            </div>
            <button className="h-7 w-[86px] rounded-[3px] border border-[#707070] bg-linear-to-b from-[#f4f4f4] via-[#e6e6e6] to-[#cfcfcf] shadow-[inset_0_0_0_1px_#fafafa]">
              取消
            </button>
          </div>
          <svg width="9" height="9" viewBox="0 0 9 9" className="absolute right-[2px] bottom-[2px]" aria-hidden="true">
            <path d="M7 0h2v2h-2zM7 3.500h2v2h-2zM7 7h2v2h-2zM3.500 3.500h2v2h-2zM3.500 7h2v2h-2zM0 7h2v2h-2z" fill="#c4c4c4" />
          </svg>
        </div>
      </div>
    </section>
  );
}

function Arrows() {
  return (
    <svg
      width="660"
      height="600"
      viewBox="0 0 660 600"
      className="pointer-events-none absolute top-0 left-0 drop-shadow-[3px_4px_2px_rgba(0,0,0,0.5)]"
      aria-hidden="true"
    >
      <path d="M281 318 508 281" stroke="#f00" strokeWidth="3" strokeLinecap="round" />
      <path d="M526 277 499 274 506 281 501 288Z" fill="#f00" />
      <path d="M532.500 307 624 560" stroke="#f00" strokeWidth="3" strokeLinecap="round" />
      <path d="M630 580 615 558 624 559 629 553Z" fill="#f00" />
    </svg>
  );
}

export default function App() {
  return (
    <div className="relative flex h-screen flex-col overflow-hidden bg-white font-['Liberation_Sans','Noto_Sans_CJK_SC',sans-serif] text-sm">
      <Header />
      <div className="flex min-h-0 flex-1">
        <Sidebar />
        <main className="flex min-w-0 flex-1 flex-col">
          <Content />
          <Footer />
        </main>
      </div>
      <OpenDialog />
      <Arrows />
      <p className="pointer-events-none absolute right-2 bottom-[6px] text-base leading-6 text-white/60 text-shadow-[1px_1px_1px_rgba(0,0,0,0.2)]">
        https://blog.csdn.net/CPS1016347441
      </p>
    </div>
  );
}
